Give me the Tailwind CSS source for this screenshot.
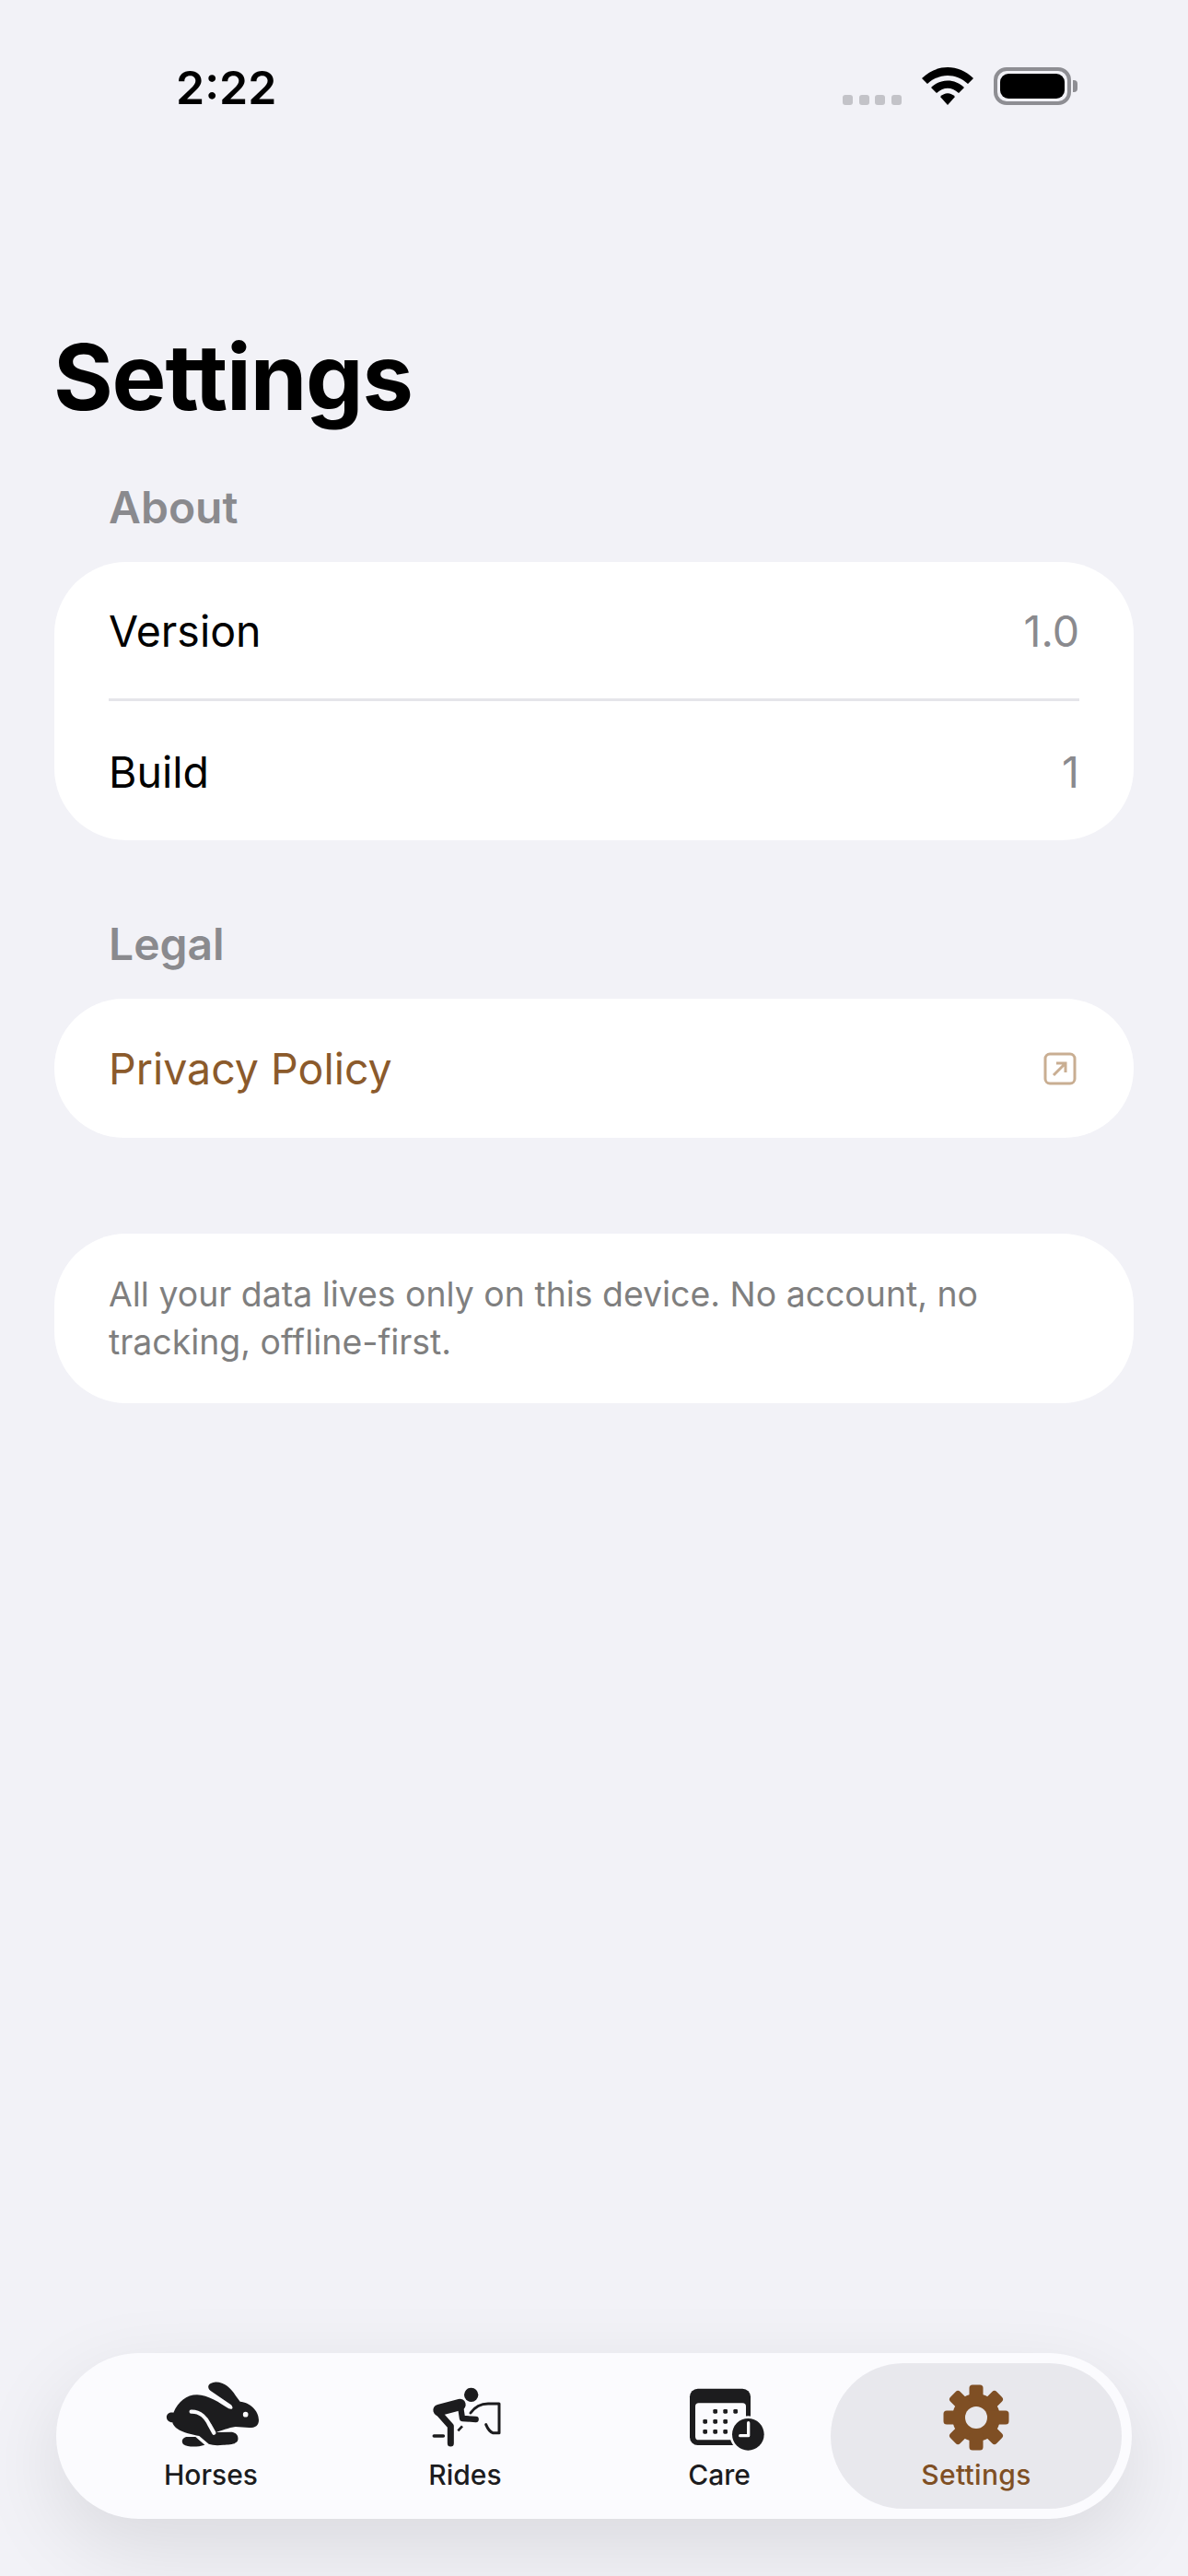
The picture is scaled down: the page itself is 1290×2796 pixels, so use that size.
<!doctype html>
<html>
<head>
<meta charset="utf-8">
<script src="https://cdn.jsdelivr.net/npm/@tailwindcss/browser@4"></script>
</head>
<body class="m-0">
<div class="w-[1290px] h-[2796px] bg-[#f2f2f7] flex flex-col overflow-hidden font-['Inter',sans-serif] text-black">
  <!-- status bar -->
  <div class="h-[130px] pt-[64px] pl-[191px] pr-[119px] flex justify-between items-start shrink-0">
    <span class="text-[50px] leading-[62px] font-semibold">2:22</span>
    <div class="flex items-center relative h-[64px] w-[256px]">
      <div class="absolute left-0 top-[39px] flex gap-[6.5px]">
        <span class="w-[11px] h-[11px] rounded-[3px] bg-[#c3c3c8]"></span>
        <span class="w-[11px] h-[11px] rounded-[3px] bg-[#c3c3c8]"></span>
        <span class="w-[11px] h-[11px] rounded-[3px] bg-[#c3c3c8]"></span>
        <span class="w-[11px] h-[11px] rounded-[3px] bg-[#c3c3c8]"></span>
      </div>
      <svg class="absolute left-[86px] top-[9px]" width="56" height="42" viewBox="0 0 56 42">
        <path d="M0 12 C16 -4 40 -4 56 12 L50 18 C37 6 19 6 6 18 Z" fill="#000"/>
        <path d="M10 22 C20 12 36 12 46 22 L40 28 C32 21 24 21 16 28 Z" fill="#000"/>
        <path d="M20 32 C25 27 31 27 36 32 L28 41 Z" fill="#000"/>
      </svg>
      <div class="absolute left-[164px] top-[9px] w-[84px] h-[41px] rounded-[14px] border-[4px] border-[#8e8e93] p-[3px]">
        <div class="w-full h-full rounded-[9px] bg-black"></div>
      </div>
      <div class="absolute left-[250px] top-[23px] w-[5px] h-[13px] rounded-r-[4px] bg-[#8e8e93]"></div>
    </div>
  </div>

  <main class="px-[59px] flex flex-col flex-1">
    <h1 class="m-0 -ml-[1px] text-[99px] leading-[124px] font-bold tracking-[-1.2px] [font-feature-settings:'calt'_0,'liga'_0] shrink-0" style="margin-top:217px">Settings</h1>

    <h2 class="mt-[49px] pl-[59px] text-[48px] leading-[62px] font-semibold text-[#8a8a8e]">About</h2>
    <section class="mt-[28px] bg-white rounded-[78px] px-[59px]">
      <div class="h-[151px] pt-[4px] flex items-center justify-between text-[46.5px] border-b-[3px] border-[#e5e5ea]">
        <span>Version</span><span class="text-[#8a8a8e]">1.0</span>
      </div>
      <div class="h-[151px] pt-[4px] flex items-center justify-between text-[46.5px]">
        <span>Build</span><span class="text-[#8a8a8e]">1</span>
      </div>
    </section>

    <h2 class="mt-[82px] pl-[59px] text-[48px] leading-[62px] font-semibold text-[#8a8a8e]">Legal</h2>
    <section class="mt-[28px] bg-white rounded-[75px] px-[59px] h-[151px] flex items-center justify-between">
      <span class="text-[46.5px] pt-[2px] text-[#8b5a2b]">Privacy Policy</span>
      <svg width="36" height="36" viewBox="0 0 36 36" fill="none" stroke="#c9ae92" class="mr-[3px]">
        <rect x="2" y="2" width="32" height="32" rx="5" stroke-width="3"/>
        <path d="M11 25 L24 12 M14 12 H24 V22" stroke-width="3"/>
      </svg>
    </section>

    <section class="mt-[104px] bg-white rounded-[78px] px-[59px] h-[184px] flex items-center">
      <p class="m-0 text-[37.4px] leading-[52px] text-[#7f7f7f]">All your data lives only on this device. No account, no tracking, offline-first.</p>
    </section>

    <nav class="mt-auto mb-[62px] ml-[2px] w-[1168px] h-[180px] rounded-[90px] bg-[#fbfbfe] shadow-[0_30px_90px_rgba(0,0,0,0.1)] flex items-start gap-[34px] pl-[47px] pt-[16px]">
      <div class="w-[242px] shrink-0 flex flex-col items-center">
        <svg width="140" height="100" viewBox="0 0 420 300">
          <path fill="#1c1c1e" d="M88 146 C104 110 130 88 165 88 C200 88 240 115 268 133 C282 138 284 128 275 120 L209 75 C196 64 200 50 222 47 C250 44 275 65 290 90 L305 110 C337 112 366 140 366 170 C366 188 355 195 335 195 L290 192 C270 195 240 205 228 210 L278 209 C296 212 300 225 298 235 C295 250 270 250 250 251 C230 254 215 252 203 248 L172 222 C150 218 120 212 100 198 C88 190 85 180 85 178 C68 178 60 160 70 150 C76 145 82 145 88 146 Z"/>
          <path fill="#1c1c1e" d="M130 225 L160 225 L190 251 C165 259 135 259 120 249 C112 238 118 228 130 225 Z"/>
          <path fill="none" stroke="#fbfbfe" stroke-width="13" stroke-linecap="round" d="M146 143 C176 142 196 165 206 187 L220 212"/>
          <circle cx="323" cy="152" r="8.5" fill="#fbfbfe"/>
        </svg>
        <span class="text-[30px] leading-[36px] -mt-[2px] font-medium text-[#1c1c1e]">Horses</span>
      </div>
      <div class="w-[242px] shrink-0 flex flex-col items-center">
        <svg width="140" height="100" viewBox="0 0 420 300" class="ml-[30px]" fill="none" stroke="#1c1c1e" stroke-linecap="round" stroke-linejoin="round">
          <circle cx="185" cy="88" r="23" fill="#1c1c1e" stroke="none"/>
          <path d="M80 138 L148 120" stroke-width="38"/>
          <path d="M150 125 L156 165 L200 168" stroke-width="19"/>
          <path d="M78 145 L118 190 L118 246" stroke-width="21"/>
          <path d="M64 222 H94" stroke-width="11"/>
          <path d="M142 205 L156 190" stroke-width="8" stroke-linecap="butt"/>
          <path d="M183 147 C195 130 215 117 240 117 L276 117 L276 212 L255 212 C243 207 238 197 233 185" stroke-width="9"/>
        </svg>
        <span class="text-[30px] leading-[36px] -mt-[2px] font-medium text-[#1c1c1e]">Rides</span>
      </div>
      <div class="w-[242px] shrink-0 flex flex-col items-center">
        <svg width="120" height="90" viewBox="0 0 360 270" class="mt-[10px] ml-[18px]">
          <rect x="57" y="38" width="198" height="184" rx="26" fill="#1c1c1e"/>
          <rect x="75" y="85" width="165" height="120" rx="11" fill="#fbfbfe"/>
          <g fill="#1c1c1e">
            <rect x="133" y="105" width="14" height="14" rx="4"/><rect x="166" y="105" width="14" height="14" rx="4"/><rect x="199" y="105" width="14" height="14" rx="4"/>
            <rect x="100" y="138" width="14" height="14" rx="4"/><rect x="133" y="138" width="14" height="14" rx="4"/><rect x="166" y="138" width="14" height="14" rx="4"/>
            <rect x="100" y="171" width="14" height="14" rx="4"/><rect x="133" y="171" width="14" height="14" rx="4"/><rect x="166" y="171" width="14" height="14" rx="4"/>
          </g>
          <circle cx="247" cy="187" r="60" fill="#fbfbfe"/>
          <circle cx="247" cy="187" r="52" fill="#1c1c1e"/>
          <path d="M248 149 V191 H221" fill="none" stroke="#fbfbfe" stroke-width="10" stroke-linecap="round" stroke-linejoin="round"/>
        </svg>
        <span class="text-[30px] leading-[36px] -mt-[2px] font-medium text-[#1c1c1e]">Care</span>
      </div>
      <div class="w-[316px] h-[158px] shrink-0 -mt-[5px] -ml-[34px] pt-[4px] rounded-[79px] bg-[#e8e8ed] flex flex-col items-center justify-center">
        <svg width="72" height="72" viewBox="-36 -36 72 72">
          <g fill="#7f4f24">
            <circle r="26"/>
            <rect x="-7.5" y="-35.5" width="15" height="71" rx="3.5"/>
            <rect x="-7.5" y="-35.5" width="15" height="71" rx="3.5" transform="rotate(45)"/>
            <rect x="-7.5" y="-35.5" width="15" height="71" rx="3.5" transform="rotate(90)"/>
            <rect x="-7.5" y="-35.5" width="15" height="71" rx="3.5" transform="rotate(135)"/>
          </g>
          <circle r="12" fill="#e8e8ed"/>
        </svg>
        <span class="text-[30px] leading-[36px] font-medium tracking-[0.3px] text-[#7f4f24] mt-[8px]">Settings</span>
      </div>
    </nav>
  </main>
</div>
</body>
</html>
